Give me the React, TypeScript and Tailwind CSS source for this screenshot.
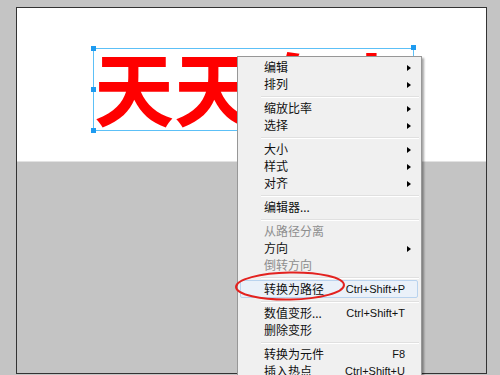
import React from "react";

type Item =
  | { sep: true }
  | { sep?: false; label: string; sub?: boolean; disabled?: boolean; shortcut?: string; hot?: boolean };

const items: Item[] = [
  { label: "编辑", sub: true },
  { label: "排列", sub: true },
  { sep: true },
  { label: "缩放比率", sub: true },
  { label: "选择", sub: true },
  { sep: true },
  { label: "大小", sub: true },
  { label: "样式", sub: true },
  { label: "对齐", sub: true },
  { sep: true },
  { label: "编辑器..." },
  { sep: true },
  { label: "从路径分离", disabled: true },
  { label: "方向", sub: true },
  { label: "倒转方向", disabled: true },
  { sep: true },
  { label: "转换为路径", shortcut: "Ctrl+Shift+P", hot: true },
  { sep: true },
  { label: "数值变形...", shortcut: "Ctrl+Shift+T" },
  { label: "删除变形" },
  { sep: true },
  { label: "转换为元件", shortcut: "F8" },
  { label: "插入热点", shortcut: "Ctrl+Shift+U" },
];

const font = { fontFamily: '"Noto Sans", "Noto Sans CJK SC", sans-serif' };

const Handle = ({ className }: { className: string }) => (
  <div className={`absolute w-[5px] h-[5px] bg-[#1e9bf0] ${className}`} />
);

const ContextMenu = () => (
  <div
    className="absolute left-[237px] top-[56px] w-[185px] h-[330px] bg-[#f0f0f0] border border-[#979797] shadow-[2px_2px_2px_rgba(0,0,0,0.35)] pt-[2px] text-[12px] text-[#111]"
    style={font}
  >
    {items.map((it, i) =>
      it.sep ? (
        <div key={i} className="h-[7px] flex items-center pl-[23px] pr-[2px]">
          <div className="w-full h-[2px] border-t border-[#e0e0e0] border-b-white border-b" />
        </div>
      ) : (
        <div
          key={i}
          className={`relative h-[17px] flex items-center pl-[26px] pr-[10px] ${
            it.disabled ? "text-[#8e8e8e]" : ""
          }`}
        >
          {it.hot && (
            <div className="absolute left-[2px] right-[3px] top-[-1px] bottom-0 border border-[#b9d3ee] bg-[#eaf1f9] rounded-[2px]" />
          )}
          <span className="relative flex-1 leading-none">{it.label}</span>
          {it.shortcut && (
            <span
              className="relative leading-none mr-[6px] text-[11px]"
              style={{ fontFamily: '"Liberation Sans", Arial, sans-serif' }}
            >
              {it.shortcut}
            </span>
          )}
          {it.sub && (
            <span className="w-0 h-0 border-y-[3.5px] border-y-transparent border-l-[4px] border-l-black" />
          )}
        </div>
      )
    )}
  </div>
);

export default function App() {
  return (
    <div className="relative w-[500px] h-[375px] bg-[#c4c4c4] overflow-hidden pt-[7px] pl-[16px]">
      <div className="w-[471px] h-[367px] border border-[#333] flex flex-col">
        <div className="relative h-[154px] bg-white border-b border-[#e2e2e2]">
          <div className="absolute left-[76px] top-[40px] w-[321px] h-[83px] border border-[#5cc0f7]">
            <div
              className="absolute left-0 top-[-4px] text-[80px] leading-none font-bold text-[#ff0000] whitespace-nowrap"
              style={{ fontFamily: '"Noto Sans CJK SC", sans-serif' }}
            >
              天天向上
            </div>
            <Handle className="left-[-3px] top-[-3px]" />
            <Handle className="left-[-3px] top-[38px]" />
            <Handle className="left-[-3px] bottom-[-3px]" />
            <Handle className="right-[-3px] top-[-4px]" />
          </div>
        </div>
        <div className="flex-1" />
      </div>
      <ContextMenu />
      <svg className="absolute left-0 top-0" width="500" height="375">
        <ellipse cx="290" cy="286" rx="54" ry="13.5" fill="none" stroke="#e3221f" strokeWidth="2" transform="rotate(-1 290 286)" />
      </svg>
    </div>
  );
}
